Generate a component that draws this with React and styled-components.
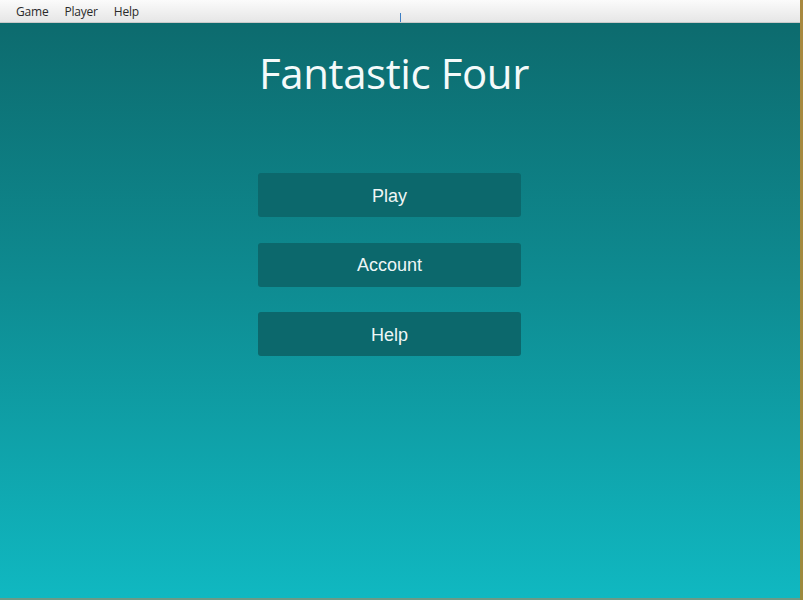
import React from 'react'
import styled, { createGlobalStyle } from 'styled-components'

const GlobalStyle = createGlobalStyle`
  html, body {
    margin: 0;
    padding: 0;
    width: 803px;
    height: 600px;
    overflow: hidden;
  }
`;

const App = () => {
  return (
    <>
      <GlobalStyle />
      <Window>
        <Stage>
          <MenuBar>
            <MenuItem>Game</MenuItem>
            <MenuItem>Player</MenuItem>
            <MenuItem>Help</MenuItem>
            <Tick />
          </MenuBar>
          <Content>
            <Title>Fantastic Four</Title>
            <Buttons>
              <Button>Play</Button>
              <Button>Account</Button>
              <Button>Help</Button>
            </Buttons>
          </Content>
        </Stage>
        <Edge />
      </Window>
    </>
  );
}

export default App

const Window = styled.div`
  width: 803px;
  height: 600px;
  display: flex;
`;

const Stage = styled.div`
  width: 800px;
  height: 600px;
  display: flex;
  flex-direction: column;
  border-bottom: 2px solid #6c9a86;
  box-sizing: border-box;
`;

const Edge = styled.div`
  width: 3px;
  height: 600px;
  background: linear-gradient(to bottom, #a8893f, #9c8a3e);
`;

const MenuBar = styled.div`
  position: relative;
  height: 23px;
  flex-shrink: 0;
  display: flex;
  align-items: center;
  padding-left: 10px;
  box-sizing: border-box;
  background: linear-gradient(to bottom, #fbfbfb, #e6e6e6);
  border-bottom: 1px solid #c9c9c9;
  font-family: "Open Sans", "Noto Sans", sans-serif;
  font-size: 12px;
  color: #2a2a2a;
`;

const MenuItem = styled.div`
  padding: 1px 6px 0;
  margin-right: 4px;
  line-height: 24px;
  letter-spacing: -0.2px;
`;

const Tick = styled.div`
  position: absolute;
  left: 400px;
  bottom: 0;
  width: 1px;
  height: 9px;
  background: #3d7fc4;
`;

const Content = styled.div`
  flex: 1;
  display: flex;
  flex-direction: column;
  align-items: center;
  background: linear-gradient(to bottom, #0d6b6e 0%, #0e8b91 45%, #10b8c1 100%);
`;

const Title = styled.div`
  margin-top: 24px;
  margin-left: -12px;
  font-family: "Open Sans", "Noto Sans", sans-serif;
  font-weight: 400;
  font-size: 42px;
  line-height: 52px;
  color: #f4fafa;
  letter-spacing: -0.4px;
`;

const Buttons = styled.div`
  margin-top: 74px;
  margin-left: -21px;
  display: flex;
  flex-direction: column;
  gap: 25.5px;
`;

const Button = styled.div`
  width: 263px;
  height: 44px;
  box-sizing: border-box;
  padding-top: 2px;
  border-radius: 3px;
  background-color: #0c686c;
  display: flex;
  justify-content: center;
  align-items: center;
  font-family: "Liberation Sans", Arial, sans-serif;
  font-size: 18px;
  color: #eef6f6;
  cursor: pointer;
`;
